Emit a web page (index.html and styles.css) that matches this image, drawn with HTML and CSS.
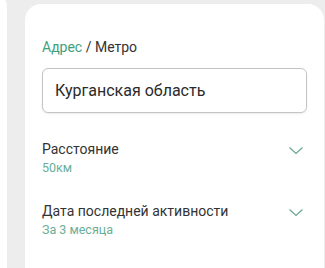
FILE: index.html
```html
<!DOCTYPE html>
<html lang="ru">
<head>
<meta charset="utf-8">
<link rel="stylesheet" href="styles.css">
</head>
<body>
<div class="page">
  <div class="side"></div>
  <div class="card">
    <div class="title"><span class="accent">Адрес</span> / Метро</div>
    <div class="input">Курганская область</div>
    <div class="row">
      <div class="row-text">
        <div class="row-label">Расстояние</div>
        <div class="row-value">50км</div>
      </div>
      <svg class="chev" width="16" height="9" viewBox="0 0 16 9"><path d="M1.5 1.5 L8 7.5 L14.5 1.5" fill="none" stroke="#66a694" stroke-width="1.2"/></svg>
    </div>
    <div class="row">
      <div class="row-text">
        <div class="row-label">Дата последней активности</div>
        <div class="row-value">За 3 месяца</div>
      </div>
      <svg class="chev" width="16" height="9" viewBox="0 0 16 9"><path d="M1.5 1.5 L8 7.5 L14.5 1.5" fill="none" stroke="#66a694" stroke-width="1.2"/></svg>
    </div>
  </div>
</div>
</body>
</html>
```
FILE: styles.css
```css
html, body {
  margin: 0;
  padding: 0;
}
body {
  background: #ededed;
  font-family: Roboto, "Liberation Sans", Arial, sans-serif;
  color: #333333;
  width: 325px;
  height: 268px;
  overflow: hidden;
}
.page {
  display: flex;
  gap: 18px;
  height: 268px;
  overflow: hidden;
}
.side {
  width: 7px;
  flex: none;
  background: #ffffff;
  margin-top: -2px;
  height: 270px;
  border-top-right-radius: 10px;
}
.card {
  flex: none;
  width: 299px;
  margin-top: 4px;
  height: 264px;
  background: #ffffff;
  border-radius: 16px 16px 0 0;
  box-sizing: border-box;
  padding: 35px 17px 0 17px;
}
.title {
  font-size: 14px;
  line-height: 16px;
  color: #333333;
}
.accent {
  color: #3e9f7c;
}
.input {
  margin-top: 13px;
  width: 265px;
  height: 45px;
  box-sizing: border-box;
  border: 1px solid #c4c4c4;
  border-radius: 6px;
  box-shadow: 0 1px 2px rgba(0,0,0,0.08);
  padding: 0 12px;
  display: flex;
  align-items: center;
  font-size: 16px;
  color: #2a2a2a;
}
.row {
  display: flex;
  justify-content: space-between;
  align-items: flex-start;
  width: 265px;
  margin-top: 28px;
}
.row + .row {
  margin-top: 28px;
}
.row-label {
  font-size: 14px;
  line-height: 16px;
  color: #333333;
}
.row-value {
  font-size: 12.5px;
  line-height: 14px;
  margin-top: 4px;
  color: #6aae98;
}
.chev {
  margin-top: 5px;
  margin-right: 3px;
}
```
